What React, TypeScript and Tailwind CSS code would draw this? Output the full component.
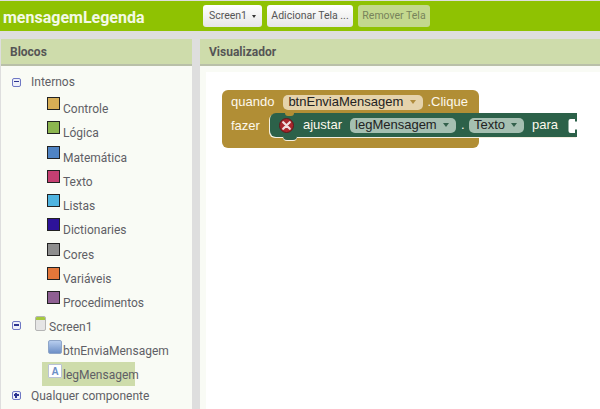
const categories = [
  { name: 'Controle', color: 'bg-[#d8ae55]' },
  { name: 'Lógica', color: 'bg-[#8cb54f]' },
  { name: 'Matemática', color: 'bg-[#4f83c3]' },
  { name: 'Texto', color: 'bg-[#c63f72]' },
  { name: 'Listas', color: 'bg-[#4fb4e0]' },
  { name: 'Dictionaries', color: 'bg-[#2d1299]' },
  { name: 'Cores', color: 'bg-[#8e8e8e]' },
  { name: 'Variáveis', color: 'bg-[#e4773a]' },
  { name: 'Procedimentos', color: 'bg-[#8e5f92]' },
]

function TreeToggle({ open }: { open: boolean }) {
  return (
    <div className="relative shrink-0 w-[9px] h-[9px] rounded-[2px] border-[1.5px] border-[#6f78c4] bg-[#eef0fa]">
      <div className="absolute left-[0.5px] top-[2px] w-[5px] h-[1.5px] bg-[#2d3590]" />
      {!open && <div className="absolute left-[2px] top-[0.5px] w-[1.5px] h-[5px] bg-[#2d3590]" />}
    </div>
  )
}

function Dropdown({ label, tone, width }: { label: string; tone: 'event' | 'set'; width: string }) {
  return (
    <div
      className={`flex items-center justify-between h-[15px] rounded-[5px] pl-[5px] pr-[7px] text-[#222] ${width} ${
        tone === 'event' ? 'bg-[#e5d3ac]' : 'bg-[#a5bfb1]'
      }`}
    >
      <span>{label}</span>
      <span
        className={`w-0 h-0 border-x-[3px] border-x-transparent border-t-[4px] ${
          tone === 'event' ? 'border-t-[#b08c3e]' : 'border-t-[#33614c]'
        }`}
      />
    </div>
  )
}

function TreeItem({ children, label, selected }: { children: React.ReactNode; label: string; selected?: boolean }) {
  return (
    <div className={`flex items-center h-[24px] pl-[6px] w-[93px] ${selected ? 'bg-[#cedcab]' : ''}`}>
      {children}
      <span className="ml-[1px] mt-[3px] leading-[14px] whitespace-nowrap">{label}</span>
    </div>
  )
}

export default function App() {
  return (
    <div className="w-[600px] h-[409px] overflow-hidden flex flex-col bg-[#dedede] font-['Roboto',sans-serif] text-[12px] text-[#5f5f66]">
      {/* Header */}
      <div className="mt-px h-[30px] shrink-0 bg-[#8fc202] flex items-center">
        <div className="w-[203px] pl-[3px] mt-[4px] font-bold text-[16px] text-[#f4f9e6] whitespace-nowrap">
          mensagemLegenda
        </div>
        <div className="flex gap-[5px] text-[10.5px]">
          <button className="h-[22px] w-[59px] rounded-[3px] bg-gradient-to-b from-white to-[#e6e6e6] text-[#555] flex items-center justify-center gap-[5px]">
            Screen1
            <span className="w-0 h-0 border-x-[2.5px] border-x-transparent border-t-[3px] border-t-[#333]" />
          </button>
          <button className="h-[22px] w-[86px] rounded-[3px] bg-gradient-to-b from-white to-[#e6e6e6] text-[#555] whitespace-nowrap">
            Adicionar Tela ...
          </button>
          <button className="h-[22px] w-[72px] rounded-[3px] bg-[#c3d88e] text-[#77835a] whitespace-nowrap">
            Remover Tela
          </button>
        </div>
      </div>

      <div className="flex-1 flex mt-[8px] min-h-0">
        {/* Blocos */}
        <div className="w-[191px] ml-px flex flex-col">
          <div className="h-[27px] shrink-0 bg-[#cedcab] border-b-2 border-[#b9c0a8] flex items-center pl-[9px] pt-[1px] font-bold text-[12px] text-[#555]">
            Blocos
          </div>
          <div className="flex-1 bg-[#f9fbf5]">
            <div className="flex items-center h-[14px] mt-[9px] ml-[11px]">
              <TreeToggle open />
              <span className="ml-[10px]">Internos</span>
            </div>
            <div className="mt-[6px] ml-[46px] flex flex-col">
              {categories.map((c) => (
                <div key={c.name} className="flex items-start h-[24.3px] pt-[1px]">
                  <div className={`w-[13px] h-[13px] mt-[1px] border-[1.5px] border-[#222] ${c.color}`} />
                  <span className="ml-[3px] mt-[6px] leading-[14px]">{c.name}</span>
                </div>
              ))}
            </div>
            <div className="flex items-center h-[20px] mt-[2px] ml-[11px]">
              <TreeToggle open />
              <div className="ml-[14px] w-[11px] h-[15px] -mt-[4px] rounded-[2px] border border-[#b5b5b5] bg-[#e5e5e5] overflow-hidden">
                <div className="h-[3px] bg-[#a6c93f]" />
              </div>
              <span className="ml-[3px] mt-[2px]">Screen1</span>
            </div>
            <div className="ml-[41px] flex flex-col mt-[2px]">
              <TreeItem label="btnEnviaMensagem">
                <div className="shrink-0 w-[14px] h-[14px] mb-[6px] rounded-[2px] border border-[#8ea5c8] bg-gradient-to-b from-[#b7cdee] to-[#6d8fc6]" />
              </TreeItem>
              <TreeItem label="legMensagem" selected>
                <div className="shrink-0 w-[14px] h-[14px] mb-[5px] rounded-[1px] border border-[#b9c2d6] bg-white flex items-center justify-center font-['Liberation_Sans',sans-serif] font-bold text-[10px] text-[#6d8fc6]">
                  A
                </div>
              </TreeItem>
            </div>
            <div className="flex items-center h-[14px] mt-[3px] ml-[11px]">
              <TreeToggle open={false} />
              <span className="ml-[10px] whitespace-nowrap">Qualquer componente</span>
            </div>
          </div>
        </div>

        {/* Visualizador */}
        <div className="w-[400px] ml-[8px] flex flex-col">
          <div className="h-[27px] shrink-0 bg-[#cedcab] border-b-2 border-[#b9c0a8] flex items-center pl-[9px] pt-[1px] font-bold text-[12px] text-[#555]">
            Visualizador
          </div>
          <div className="flex-1 bg-[#f9fbf5] pt-[6px] pl-[6px]">
            <div className="bg-white h-full pt-[18px] pl-[16px] font-['Liberation_Sans',sans-serif] text-[13px]">
              {/* Event block */}
              <div className="relative w-[257px] h-[58px] rounded-[6px] bg-[#b18e35] text-[#fdf8ec]">
                <div className="flex items-center h-[24px] pl-[9px]">
                  <span>quando</span>
                  <div className="ml-[9px]">
                    <Dropdown label="btnEnviaMensagem" tone="event" width="w-[140px]" />
                  </div>
                  <span className="ml-[4px]">.Clique</span>
                </div>
                <div className="pl-[9px] pt-[2px]">fazer</div>
                {/* Setter block */}
                <div className="absolute left-[48px] top-[23px] w-[307px] h-[24px] rounded-l-[6px] bg-[#2c6149] flex items-center shadow-[-1px_1px_0_#f4efe0]">
                  <div className="absolute left-[15px] -top-px w-[9px] h-[4px] rounded-b-[3px] bg-[#b18e35]" />
                  <div className="absolute left-[13px] top-[22px] w-[14px] h-[5px] rounded-b-[4px] bg-[#2c6149] shadow-[0_1px_0_#f4efe0]" />
                  <div className="relative ml-[9px] w-[15px] h-[15px] rounded-full bg-[#a8262c] border border-[#5c1a1c] flex items-center justify-center">
                    <svg width="9" height="9" viewBox="0 0 9 9">
                      <path d="M1.2 1.2 7.8 7.8M7.8 1.2 1.2 7.8" stroke="#f0dede" strokeWidth="2.2" strokeLinecap="round" />
                    </svg>
                  </div>
                  <span className="ml-[9px]">ajustar</span>
                  <div className="ml-[8px]">
                    <Dropdown label="legMensagem" tone="set" width="w-[106px]" />
                  </div>
                  <span className="ml-[5px] w-[8px]">.</span>
                  <Dropdown label="Texto" tone="set" width="w-[55px]" />
                  <span className="ml-[8px]">para</span>
                  <svg className="absolute right-0 top-[6px]" width="9" height="14" viewBox="0 0 9 14">
                    <path d="M2.5 0H7V2.5H9V10.5H7V14H2.5Q0.5 14 0.5 12V2Q0.5 0 2.5 0Z" fill="#fff" />
                  </svg>
                </div>
              </div>
            </div>
          </div>
        </div>
      </div>
    </div>
  )
}
